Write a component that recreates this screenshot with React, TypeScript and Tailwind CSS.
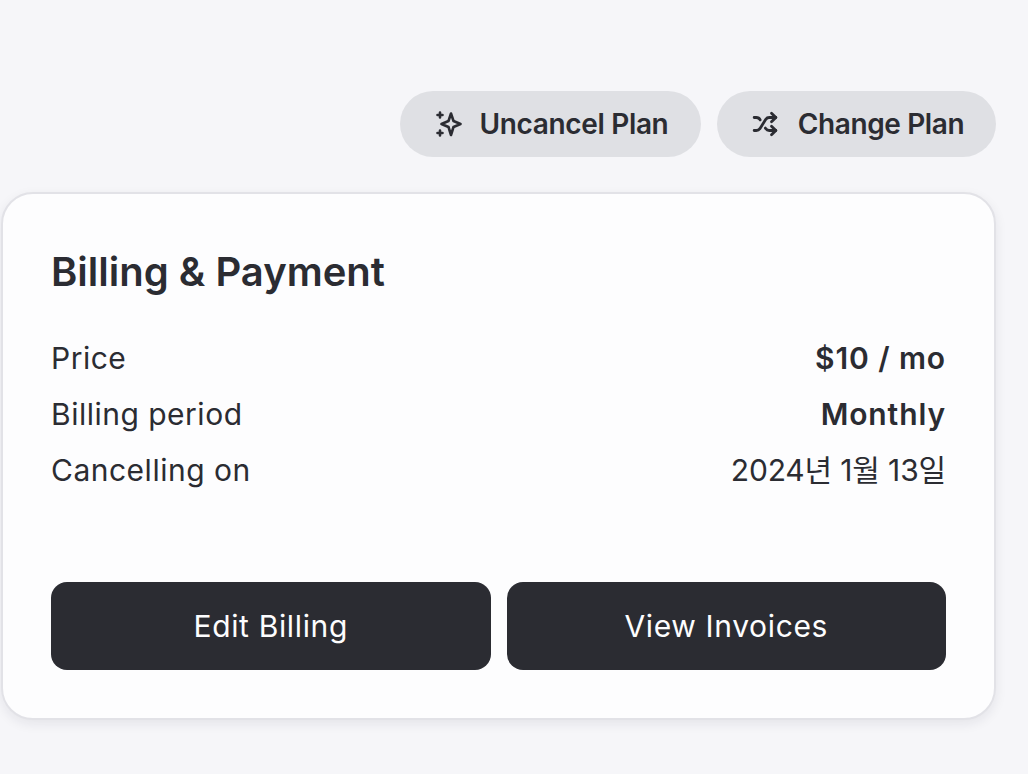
import React from 'react';
import { Shuffle } from 'lucide-react';

const font = { fontFamily: '"Inter", "Noto Sans CJK KR", sans-serif' };

const SparkIcon = () => (
  <svg width="28" height="28" viewBox="0 0 28 28" fill="none" stroke="currentColor" strokeWidth="2.6" strokeLinecap="round" strokeLinejoin="round">
    <path d="M17 3.5 L19.5 11 L26.5 14 L19.5 17 L17 25 L14.5 17 L7.5 14 L14.5 11 Z" />
    <path d="M6 2.5v5M3.5 5h5" />
    <path d="M6 20.5v5M3.5 23h5" />
  </svg>
);

const Row = ({ label, value, bold }: { label: string; value: string; bold?: boolean }) => (
  <div className="flex justify-between items-center h-[56px]">
    <span className="text-[30px] tracking-[0.5px] font-normal">{label}</span>
    <span className={`text-[30px] ${bold ? 'font-semibold tracking-[0.9px]' : 'font-normal tracking-[-0.15px]'}`}>{value}</span>
  </div>
);

export default function App() {
  return (
    <div className="min-h-screen bg-[#f6f6f9] text-[#2b2c32] pt-[91px] pl-[1px] pr-[32px] text-[30px]" style={font}>
      <div className="flex justify-end gap-4">
        <button className="h-[66px] w-[301px] pl-[1px] rounded-full bg-[#dfe0e4] flex items-center justify-center gap-[18px] text-[28px] font-semibold tracking-[-0.35px]">
          <SparkIcon />
          Uncancel Plan
        </button>
        <button className="h-[66px] w-[279px] pl-[3px] rounded-full bg-[#dfe0e4] flex items-center justify-center gap-[20px] text-[28px] font-semibold tracking-[-0.4px]">
          <Shuffle size={26} strokeWidth={2.6} />
          Change Plan
        </button>
      </div>

      <div className="mt-[35px] h-[528px] rounded-[32px] border-2 border-[#e2e2e7] bg-[#fdfdfe] shadow-[0_4px_12px_rgba(30,30,50,0.08)] pl-[48px] pr-[48px] pt-[50px] flex flex-col">
        <h2 className="text-[40px] leading-[56px] font-semibold tracking-[0px]">Billing &amp; Payment</h2>
        <div className="mt-[30px]">
          <Row label="Price" value="$10 / mo" bold />
          <Row label="Billing period" value="Monthly" bold />
          <Row label="Cancelling on" value="2024년 1월 13일" />
        </div>
        <div className="mt-[84px] grid grid-cols-2 gap-4">
          <button className="h-[88px] rounded-2xl bg-[#2b2c32] text-[#fdfdfe] text-[30px] font-normal tracking-[0.65px]">Edit Billing</button>
          <button className="h-[88px] rounded-2xl bg-[#2b2c32] text-[#fdfdfe] text-[30px] font-normal tracking-[0.65px]">View Invoices</button>
        </div>
      </div>
    </div>
  );
}
